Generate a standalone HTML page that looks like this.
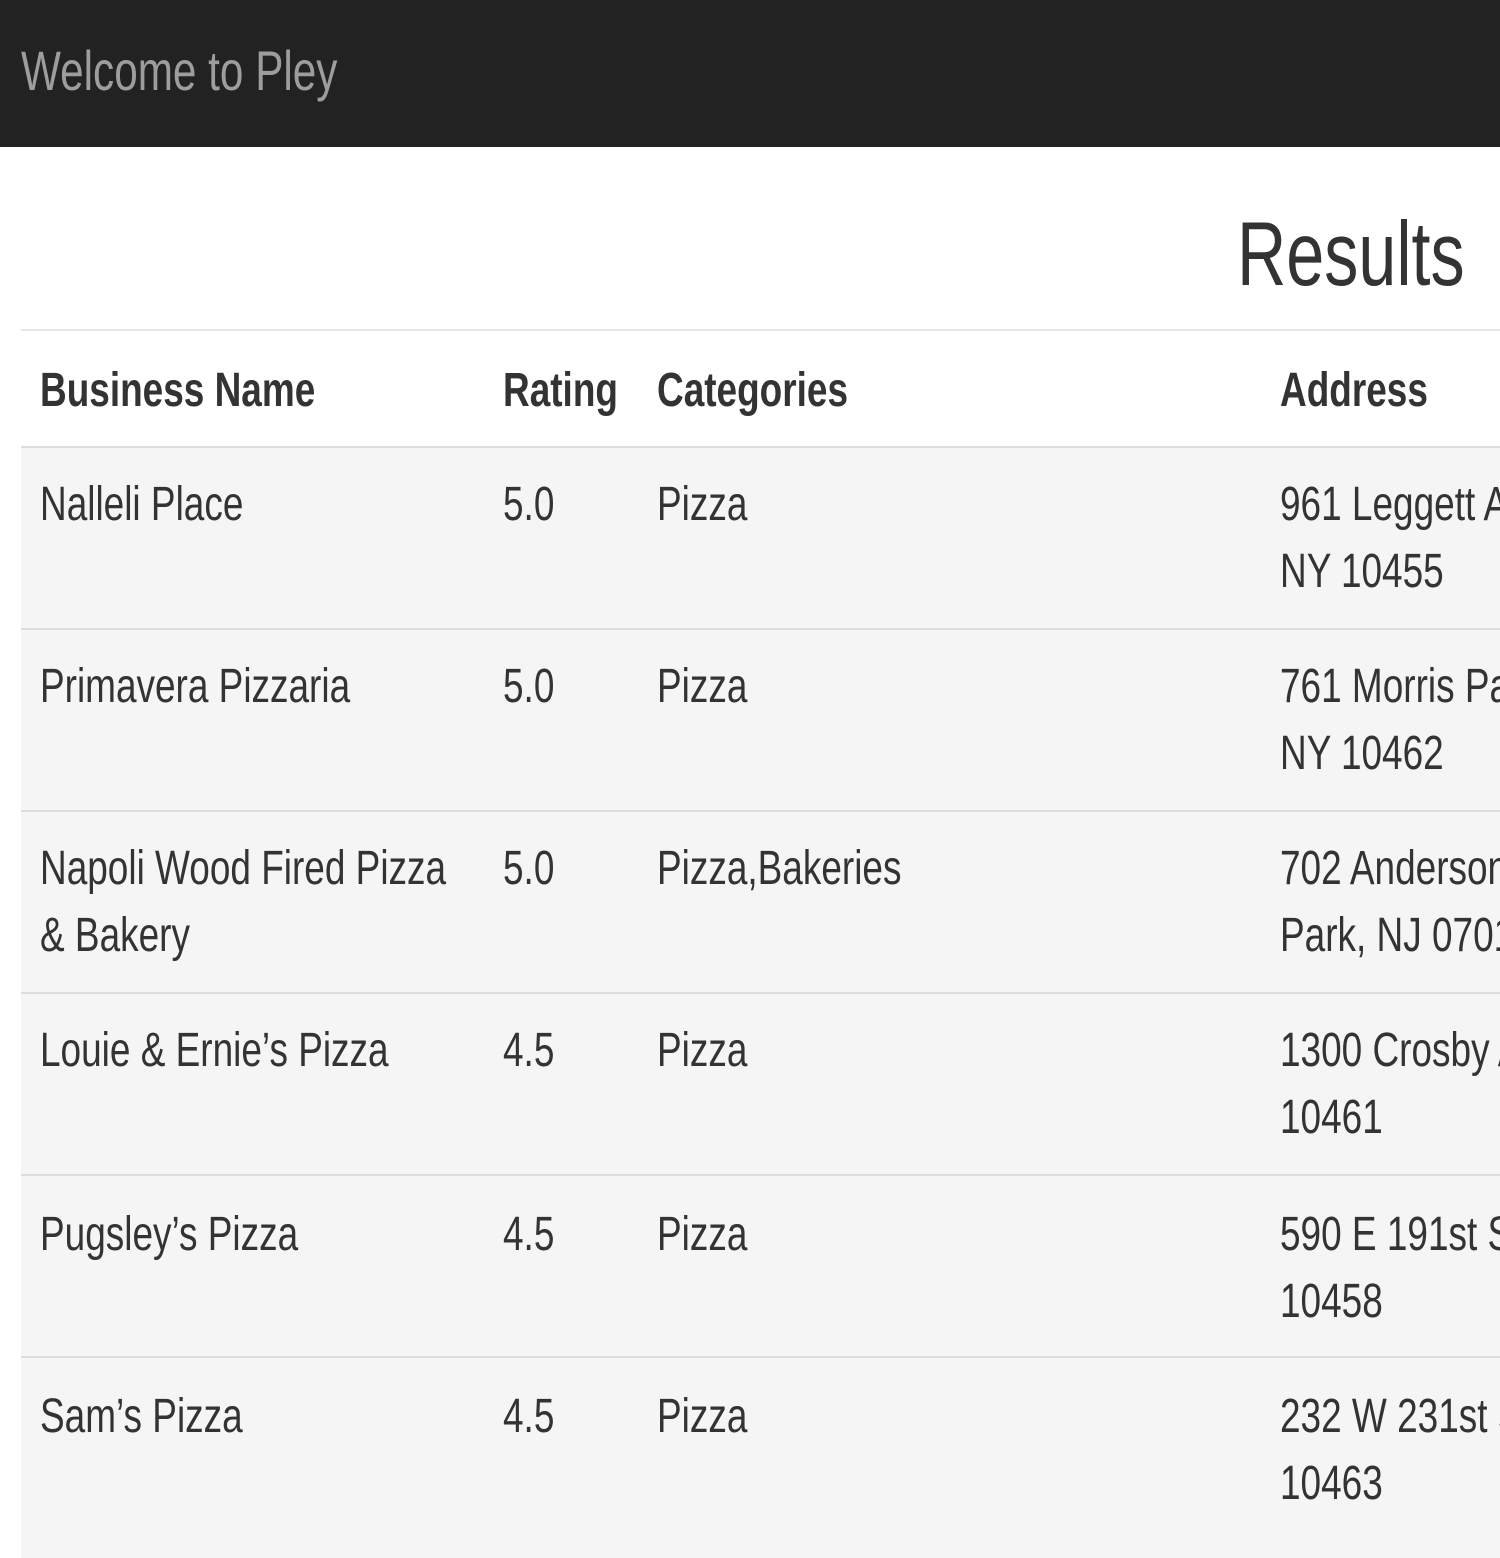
<!DOCTYPE html>
<html><head><meta charset="utf-8"><style>
html,body{margin:0;padding:0;width:1500px;height:1500px;overflow:hidden;background:#fff;font-family:"Liberation Sans",Arial,sans-serif;}
.nav{position:absolute;left:0;top:0;width:1500px;height:147px;background:#222;}
.t{position:absolute;white-space:nowrap;transform:scaleX(0.77);transform-origin:0 0;color:#333;font-size:48px;line-height:67px;}
.row{position:absolute;left:21px;width:1479px;height:181px;background:#f5f5f5;border-top:2px solid #ddd;}
.b{font-weight:bold;}
</style></head><body>
<div class="nav"></div>
<div class="t" style="left:21px;top:36px;font-size:56px;color:#9d9d9d;line-height:70px;transform:scaleX(0.755);">Welcome to Pley</div>
<div class="t" style="left:1237px;top:200px;font-size:91px;line-height:110px;transform:scaleX(0.75);">Results</div>
<div style="position:absolute;left:21px;top:329px;width:1479px;height:2px;background:#e5e5e5;"></div>
<div class="t b" style="left:40px;top:357px;">Business Name</div>
<div class="t b" style="left:503px;top:357px;">Rating</div>
<div class="t b" style="left:657px;top:357px;">Categories</div>
<div class="t b" style="left:1280px;top:357px;">Address</div>

<div class="row" style="top:446px"></div>
<div class="row" style="top:628px"></div>
<div class="row" style="top:810px"></div>
<div class="row" style="top:992px"></div>
<div class="row" style="top:1174px"></div>
<div class="row" style="top:1356px;height:200px"></div>

<div class="t" style="left:40px;top:471px;">Nalleli Place</div>
<div class="t" style="left:503px;top:471px;">5.0</div>
<div class="t" style="left:657px;top:471px;">Pizza</div>
<div class="t" style="left:1280px;top:471px;">961 Leggett Ave<br>NY 10455</div>

<div class="t" style="left:40px;top:653px;">Primavera Pizzaria</div>
<div class="t" style="left:503px;top:653px;">5.0</div>
<div class="t" style="left:657px;top:653px;">Pizza</div>
<div class="t" style="left:1280px;top:653px;">761 Morris Park<br>NY 10462</div>

<div class="t" style="left:40px;top:835px;">Napoli Wood Fired Pizza<br>&amp; Bakery</div>
<div class="t" style="left:503px;top:835px;">5.0</div>
<div class="t" style="left:657px;top:835px;">Pizza,Bakeries</div>
<div class="t" style="left:1280px;top:835px;">702 Anderson<br>Park, NJ 07010</div>

<div class="t" style="left:40px;top:1017px;">Louie &amp; Ernie’s Pizza</div>
<div class="t" style="left:503px;top:1017px;">4.5</div>
<div class="t" style="left:657px;top:1017px;">Pizza</div>
<div class="t" style="left:1280px;top:1017px;">1300 Crosby Ave<br>10461</div>

<div class="t" style="left:40px;top:1201px;">Pugsley’s Pizza</div>
<div class="t" style="left:503px;top:1201px;">4.5</div>
<div class="t" style="left:657px;top:1201px;">Pizza</div>
<div class="t" style="left:1280px;top:1201px;">590 E 191st St<br>10458</div>

<div class="t" style="left:40px;top:1383px;">Sam’s Pizza</div>
<div class="t" style="left:503px;top:1383px;">4.5</div>
<div class="t" style="left:657px;top:1383px;">Pizza</div>
<div class="t" style="left:1280px;top:1383px;">232 W 231st St<br>10463</div>
</body></html>
